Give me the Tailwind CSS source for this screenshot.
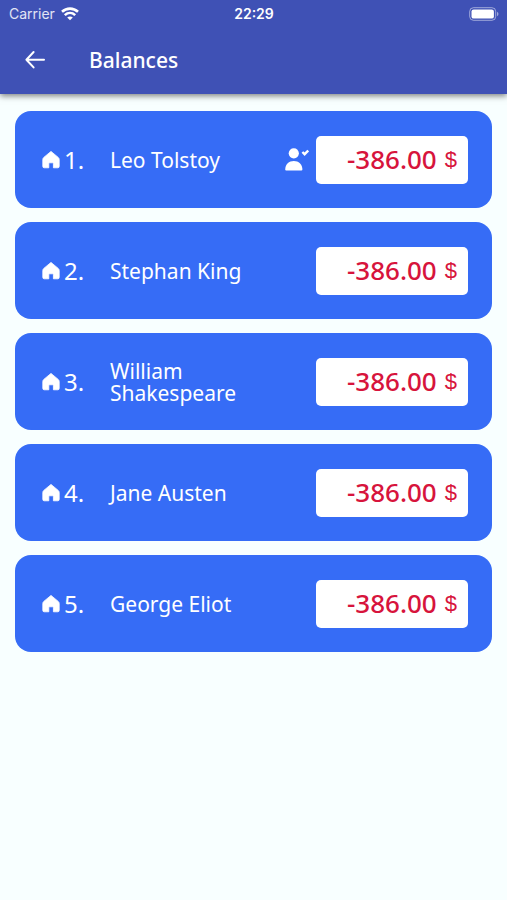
<!DOCTYPE html>
<html lang="en">
  <head>
    <meta charset="UTF-8" />
    <meta name="viewport" content="width=device-width, initial-scale=1.0" />
    <title>Balances</title>
    <script src="https://cdn.jsdelivr.net/npm/@tailwindcss/browser@4"></script>
  </head>
  <body class="min-h-screen bg-[#f8ffff] font-['Noto_Sans',sans-serif] text-white">
    <!-- Icons shared by the rows -->
    <svg class="hidden">
      <symbol id="home" viewBox="0 0 18 18">
        <path
          d="M9 0.4L16.2 6.4Q17.2 7.2 17.2 8.6V15.4Q17.2 16.8 15.8 16.8H11.4V12.6Q11.4 11.8 10.6 11.8H7.6Q6.8 11.8 6.8 12.6V16.8H2.2Q0.8 16.8 0.8 15.4V8.6Q0.8 7.2 1.8 6.4Z"
          fill="currentColor"
          stroke="currentColor"
          stroke-width="0.8"
          stroke-linejoin="round"
        />
      </symbol>
      <symbol id="user-check" viewBox="0 0 24 24">
        <circle cx="8.8" cy="5.3" r="5.1" fill="currentColor" />
        <path d="M0.2 21.6C0.2 16.2 4 13 8.8 13S17.4 16.2 17.4 21.6Q17.4 22.6 16.4 22.6H1.2Q0.2 22.6 0.2 21.6Z" fill="currentColor" />
        <path d="M17.4 4L19.6 6.2L23.2 2.5" fill="none" stroke="currentColor" stroke-width="2.4" />
      </symbol>
    </svg>

    <header class="bg-[#3f51b5] shadow-[0_2px_6px_rgba(0,0,0,0.5)]">
      <!-- Status bar -->
      <div class="grid h-7 grid-cols-3 items-center pr-2 pl-[9px] font-[Inter,sans-serif] text-sm">
        <div class="flex items-center gap-1.5 text-white/85">
          <span>Carrier</span>
          <svg class="h-[14px] w-[18px] text-white" viewBox="0 0 18 14" fill="none" stroke="currentColor" stroke-width="2.6">
            <path d="M1 4.8C5.6 0.5 12.4 0.5 17 4.8" />
            <path d="M3.8 8.1C6.9 5.3 11.1 5.3 14.2 8.1" />
            <path d="M9 13.3L6.2 10.5C7.8 9 10.2 9 11.8 10.5Z" fill="currentColor" stroke="none" />
          </svg>
        </div>
        <div class="text-center font-semibold">22:29</div>
        <svg class="h-[14px] w-[30px] justify-self-end" viewBox="0 0 30 14">
          <rect x="0.7" y="0.7" width="26" height="12.6" rx="3.8" fill="none" stroke="white" stroke-opacity="0.5" />
          <rect x="2.5" y="2.4" width="22.4" height="9.2" rx="2.2" fill="white" />
          <path d="M28 4.8Q29.5 5.5 29.5 7T28 9.2Z" fill="white" fill-opacity="0.5" />
        </svg>
      </div>
      <!-- App bar -->
      <div class="flex h-[66px] items-center gap-[43px] px-6">
        <button type="button" aria-label="Back">
          <svg class="size-[22px]" viewBox="0 0 22 22" fill="none" stroke="currentColor" stroke-width="2" stroke-linecap="round" stroke-linejoin="round">
            <path d="M20 9.7H2.4M9.6 2L2.4 9.7L9.6 17.4" />
          </svg>
        </button>
        <h1 class="text-[21px] font-medium">Balances</h1>
      </div>
    </header>

    <main class="px-[15px] pt-[17px]">
      <ol class="flex flex-col gap-[14px]">
        <li class="flex h-[97px] items-center rounded-2xl bg-[#366cf6] pr-6 pl-[27px]">
          <svg class="size-[18px] shrink-0"><use href="#home" /></svg>
          <span class="ml-1 w-[46px] shrink-0 text-2xl">1.</span>
          <span class="flex-1 text-[21px] leading-[22px]">Leo Tolstoy</span>
          <svg class="mr-[7px] size-6 shrink-0"><use href="#user-check" /></svg>
          <div class="flex h-12 w-[152px] shrink-0 items-center justify-end gap-2 rounded-[5px] bg-white pr-[11px] text-[#d7143c]">
            <span class="text-[26px] font-medium">-386.00</span>
            <span class="font-['Liberation_Sans',sans-serif] text-[22px]">$</span>
          </div>
        </li>
        <li class="flex h-[97px] items-center rounded-2xl bg-[#366cf6] pr-6 pl-[27px]">
          <svg class="size-[18px] shrink-0"><use href="#home" /></svg>
          <span class="ml-1 w-[46px] shrink-0 text-2xl">2.</span>
          <span class="mr-[31px] flex-1 text-[21px] leading-[22px]">Stephan King</span>
          <div class="flex h-12 w-[152px] shrink-0 items-center justify-end gap-2 rounded-[5px] bg-white pr-[11px] text-[#d7143c]">
            <span class="text-[26px] font-medium">-386.00</span>
            <span class="font-['Liberation_Sans',sans-serif] text-[22px]">$</span>
          </div>
        </li>
        <li class="flex h-[97px] items-center rounded-2xl bg-[#366cf6] pr-6 pl-[27px]">
          <svg class="size-[18px] shrink-0"><use href="#home" /></svg>
          <span class="ml-1 w-[46px] shrink-0 text-2xl">3.</span>
          <span class="mr-[31px] flex-1 text-[21px] leading-[22px]">William Shakespeare</span>
          <div class="flex h-12 w-[152px] shrink-0 items-center justify-end gap-2 rounded-[5px] bg-white pr-[11px] text-[#d7143c]">
            <span class="text-[26px] font-medium">-386.00</span>
            <span class="font-['Liberation_Sans',sans-serif] text-[22px]">$</span>
          </div>
        </li>
        <li class="flex h-[97px] items-center rounded-2xl bg-[#366cf6] pr-6 pl-[27px]">
          <svg class="size-[18px] shrink-0"><use href="#home" /></svg>
          <span class="ml-1 w-[46px] shrink-0 text-2xl">4.</span>
          <span class="mr-[31px] flex-1 text-[21px] leading-[22px]">Jane Austen</span>
          <div class="flex h-12 w-[152px] shrink-0 items-center justify-end gap-2 rounded-[5px] bg-white pr-[11px] text-[#d7143c]">
            <span class="text-[26px] font-medium">-386.00</span>
            <span class="font-['Liberation_Sans',sans-serif] text-[22px]">$</span>
          </div>
        </li>
        <li class="flex h-[97px] items-center rounded-2xl bg-[#366cf6] pr-6 pl-[27px]">
          <svg class="size-[18px] shrink-0"><use href="#home" /></svg>
          <span class="ml-1 w-[46px] shrink-0 text-2xl">5.</span>
          <span class="mr-[31px] flex-1 text-[21px] leading-[22px]">George Eliot</span>
          <div class="flex h-12 w-[152px] shrink-0 items-center justify-end gap-2 rounded-[5px] bg-white pr-[11px] text-[#d7143c]">
            <span class="text-[26px] font-medium">-386.00</span>
            <span class="font-['Liberation_Sans',sans-serif] text-[22px]">$</span>
          </div>
        </li>
      </ol>
    </main>
  </body>
</html>
